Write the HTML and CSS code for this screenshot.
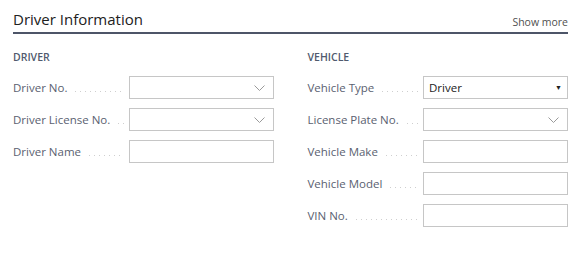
FILE: index.html
```html
<!DOCTYPE html>
<html lang="en">
<head>
    <meta charset="UTF-8">
    <meta name="viewport" content="width=device-width, initial-scale=1.0">
    <title>Driver Information</title>
    <link rel="stylesheet" href="styles.css">
</head>
<body>
    <div class="card">
        <div class="card-header">
            <h2 class="card-title">Driver Information</h2>
            <a class="show-more" href="#">Show more</a>
        </div>
        <div class="groups">
            <div class="group">
                <div class="group-title">DRIVER</div>
                <div class="field">
                    <span class="label">Driver No.</span>
                    <span class="leader"></span>
                    <div class="box lookup">
                        <svg class="chevron" viewBox="0 0 11 6" width="11" height="6"><path d="M0.5 0.5 L5.5 5.5 L10.5 0.5" fill="none" stroke="#9a9a9a" stroke-width="1"/></svg>
                    </div>
                </div>
                <div class="field">
                    <span class="label">Driver License No.</span>
                    <span class="leader"></span>
                    <div class="box lookup">
                        <svg class="chevron" viewBox="0 0 11 6" width="11" height="6"><path d="M0.5 0.5 L5.5 5.5 L10.5 0.5" fill="none" stroke="#9a9a9a" stroke-width="1"/></svg>
                    </div>
                </div>
                <div class="field">
                    <span class="label">Driver Name</span>
                    <span class="leader"></span>
                    <div class="box"></div>
                </div>
            </div>
            <div class="group">
                <div class="group-title">VEHICLE</div>
                <div class="field">
                    <span class="label">Vehicle Type</span>
                    <span class="leader"></span>
                    <div class="box option">
                        <span class="value">Driver</span>
                        <span class="caret">&#9660;</span>
                    </div>
                </div>
                <div class="field">
                    <span class="label">License Plate No.</span>
                    <span class="leader"></span>
                    <div class="box lookup">
                        <svg class="chevron" viewBox="0 0 11 6" width="11" height="6"><path d="M0.5 0.5 L5.5 5.5 L10.5 0.5" fill="none" stroke="#9a9a9a" stroke-width="1"/></svg>
                    </div>
                </div>
                <div class="field">
                    <span class="label">Vehicle Make</span>
                    <span class="leader"></span>
                    <div class="box"></div>
                </div>
                <div class="field">
                    <span class="label">Vehicle Model</span>
                    <span class="leader"></span>
                    <div class="box"></div>
                </div>
                <div class="field">
                    <span class="label">VIN No.</span>
                    <span class="leader"></span>
                    <div class="box"></div>
                </div>
            </div>
        </div>
    </div>
</body>
</html>
```

FILE: styles.css
```css
body {
    margin: 0;
    background-color: #fff;
    font-family: "Open Sans", "Noto Sans", Arial, sans-serif;
    color: #505050;
}
.card {
    padding: 0 8px 0 13px;
}
.card-header {
    display: flex;
    justify-content: space-between;
    align-items: flex-end;
    height: 32px;
    border-bottom: 2px solid #4d5568;
}
.card-title {
    margin: 0 0 3px 0;
    font-size: 15px;
    font-weight: normal;
    color: #212121;
}
.show-more {
    margin-bottom: 3px;
    font-size: 10.5px;
    color: #505050;
    text-decoration: none;
}
.groups {
    display: grid;
    grid-template-columns: 1fr 1fr;
    column-gap: 34px;
}
.group-title {
    margin-top: 16px;
    height: 26px;
    font-size: 10.5px;
    font-weight: 600;
    color: #505a6e;
}
.field {
    display: flex;
    align-items: center;
    height: 23px;
    margin-bottom: 9px;
}
.label {
    font-size: 11.5px;
    color: #5a6170;
    white-space: nowrap;
}
.leader {
    flex: 1;
    align-self: stretch;
    margin: 0 5px 0 8px;
    background-image: linear-gradient(to right, #cfcfcf 1px, transparent 1px);
    background-size: 5px 1px;
    background-repeat: repeat-x;
    background-position: 0 15px;
}
.box {
    display: flex;
    align-items: center;
    justify-content: flex-end;
    box-sizing: border-box;
    width: 145px;
    height: 23px;
    border: 1px solid #c6c6c6;
    padding: 0 8px;
}
.option {
    justify-content: space-between;
    padding: 0 5px;
}
.value {
    font-size: 11.5px;
    color: #212121;
}
.caret {
    font-size: 7px;
    color: #212121;
}
```
